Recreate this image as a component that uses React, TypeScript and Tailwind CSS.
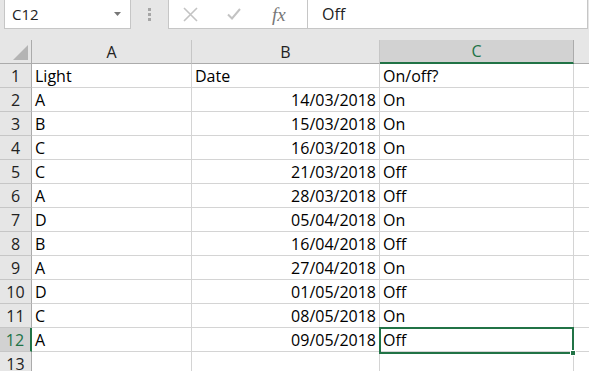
import { Fragment } from "react";

const rows: [string, string, string][] = [
  ["Light", "Date", "On/off?"],
  ["A", "14/03/2018", "On"],
  ["B", "15/03/2018", "On"],
  ["C", "16/03/2018", "On"],
  ["C", "21/03/2018", "Off"],
  ["A", "28/03/2018", "Off"],
  ["D", "05/04/2018", "On"],
  ["B", "16/04/2018", "Off"],
  ["A", "27/04/2018", "On"],
  ["D", "01/05/2018", "Off"],
  ["C", "08/05/2018", "On"],
  ["A", "09/05/2018", "Off"],
  ["", "", ""],
];

function FormulaBar() {
  return (
    <div className="flex h-[29px]">
      <div className="ml-[4px] w-[127px] h-full bg-white border-l border-r border-b border-[#c6c6c6] flex items-center pl-[7px] pr-[9px] text-[15px] text-[#222]">
        <span className="flex-1">C12</span>
        <svg width="7" height="4" viewBox="0 0 7 4">
          <path d="M0 0 H7 L3.5 4 Z" fill="#777" />
        </svg>
      </div>
      <div className="w-[37px] flex flex-col items-center justify-center gap-[2.5px]">
        <div className="w-[2.5px] h-[2.5px] bg-[#a6a6a6]" />
        <div className="w-[2.5px] h-[2.5px] bg-[#a6a6a6]" />
        <div className="w-[2.5px] h-[2.5px] bg-[#a6a6a6]" />
      </div>
      <div className="w-[420px] h-full bg-white border-l border-r border-b border-[#c6c6c6] flex">
        <div className="w-[139px] border-r border-[#c6c6c6] flex items-center">
          <svg className="ml-[14px]" width="15" height="15" viewBox="0 0 15 15">
            <path d="M1 1 L14 14 M14 1 L1 14" stroke="#c3c3c3" strokeWidth="1.6" />
          </svg>
          <svg className="ml-[29px]" width="14" height="12" viewBox="0 0 14 12">
            <path d="M1 6.5 L5 10.5 L13 1" stroke="#c3c3c3" strokeWidth="2" fill="none" />
          </svg>
          <span className="ml-[31px] font-['Liberation_Serif'] italic text-[19px] leading-none text-[#777]">fx</span>
        </div>
        <div className="flex-1 flex items-center pl-[14px] text-[16px] text-[#222]">Off</div>
      </div>
    </div>
  );
}

export default function App() {
  const cellBase = "h-[24px] border-r border-b border-[#d4d4d4] bg-white px-[3px] flex items-end pb-[1px] text-[16px] leading-[20px] text-black whitespace-nowrap";
  return (
    <div className="relative w-[589px] h-[371px] bg-[#e6e6e6] overflow-hidden font-['Open_Sans',sans-serif]">
      <FormulaBar />
      <div className="h-[11px]" />
      <div className="grid grid-cols-[32px_160px_188px_194px_1fr]">
        {/* header row */}
        <div className="relative h-[24px] border-r border-b border-[#ababab] bg-[#e6e6e6]">
          <svg className="absolute right-[3px] bottom-[3px]" width="15" height="15" viewBox="0 0 15 15">
            <path d="M15 0 V15 H0 Z" fill="#b4b4b4" />
          </svg>
        </div>
        <div className="h-[24px] border-r border-b border-r-[#c6c6c6] border-b-[#ababab] flex items-center justify-center text-[16px] text-[#222]">A</div>
        <div className="h-[24px] border-r border-b border-r-[#c6c6c6] border-b-[#ababab] flex items-center justify-center text-[16px] text-[#222]">B</div>
        <div className="h-[24px] border-r border-[#ababab] bg-[#d2d2d2] border-b-2 border-b-[#217346] flex items-center justify-center text-[16px] text-[#217346]">C</div>
        <div className="h-[24px] border-b border-[#ababab]" />
        {rows.map((r, i) => {
          const n = i + 1;
          const sel = n === 12;
          return (
            <Fragment key={n}>
              <div
                className={
                  sel
                    ? "h-[24px] border-r-2 border-r-[#217346] border-b border-b-[#c6c6c6] bg-[#d2d2d2] flex items-center justify-center text-[16px] text-[#217346]"
                    : "h-[24px] border-r border-b border-r-[#ababab] border-b-[#c6c6c6] bg-[#e6e6e6] flex items-center justify-center text-[16px] text-[#222]"
                }
              >
                {n}
              </div>
              <div className={cellBase}>{r[0]}</div>
              <div className={cellBase + (n === 1 ? "" : " justify-end")}>{r[1]}</div>
              <div className={cellBase}>{r[2]}</div>
              <div className="h-[24px] border-b border-[#d4d4d4] bg-white" />
            </Fragment>
          );
        })}
      </div>
      {/* selected cell C12 */}
      <div className="absolute left-[379px] top-[327px] w-[195px] h-[27px] border-2 border-[#217346] pointer-events-none" />
      <div className="absolute left-[570px] top-[350px] w-[6px] h-[6px] bg-[#217346] border border-white" />
    </div>
  );
}
